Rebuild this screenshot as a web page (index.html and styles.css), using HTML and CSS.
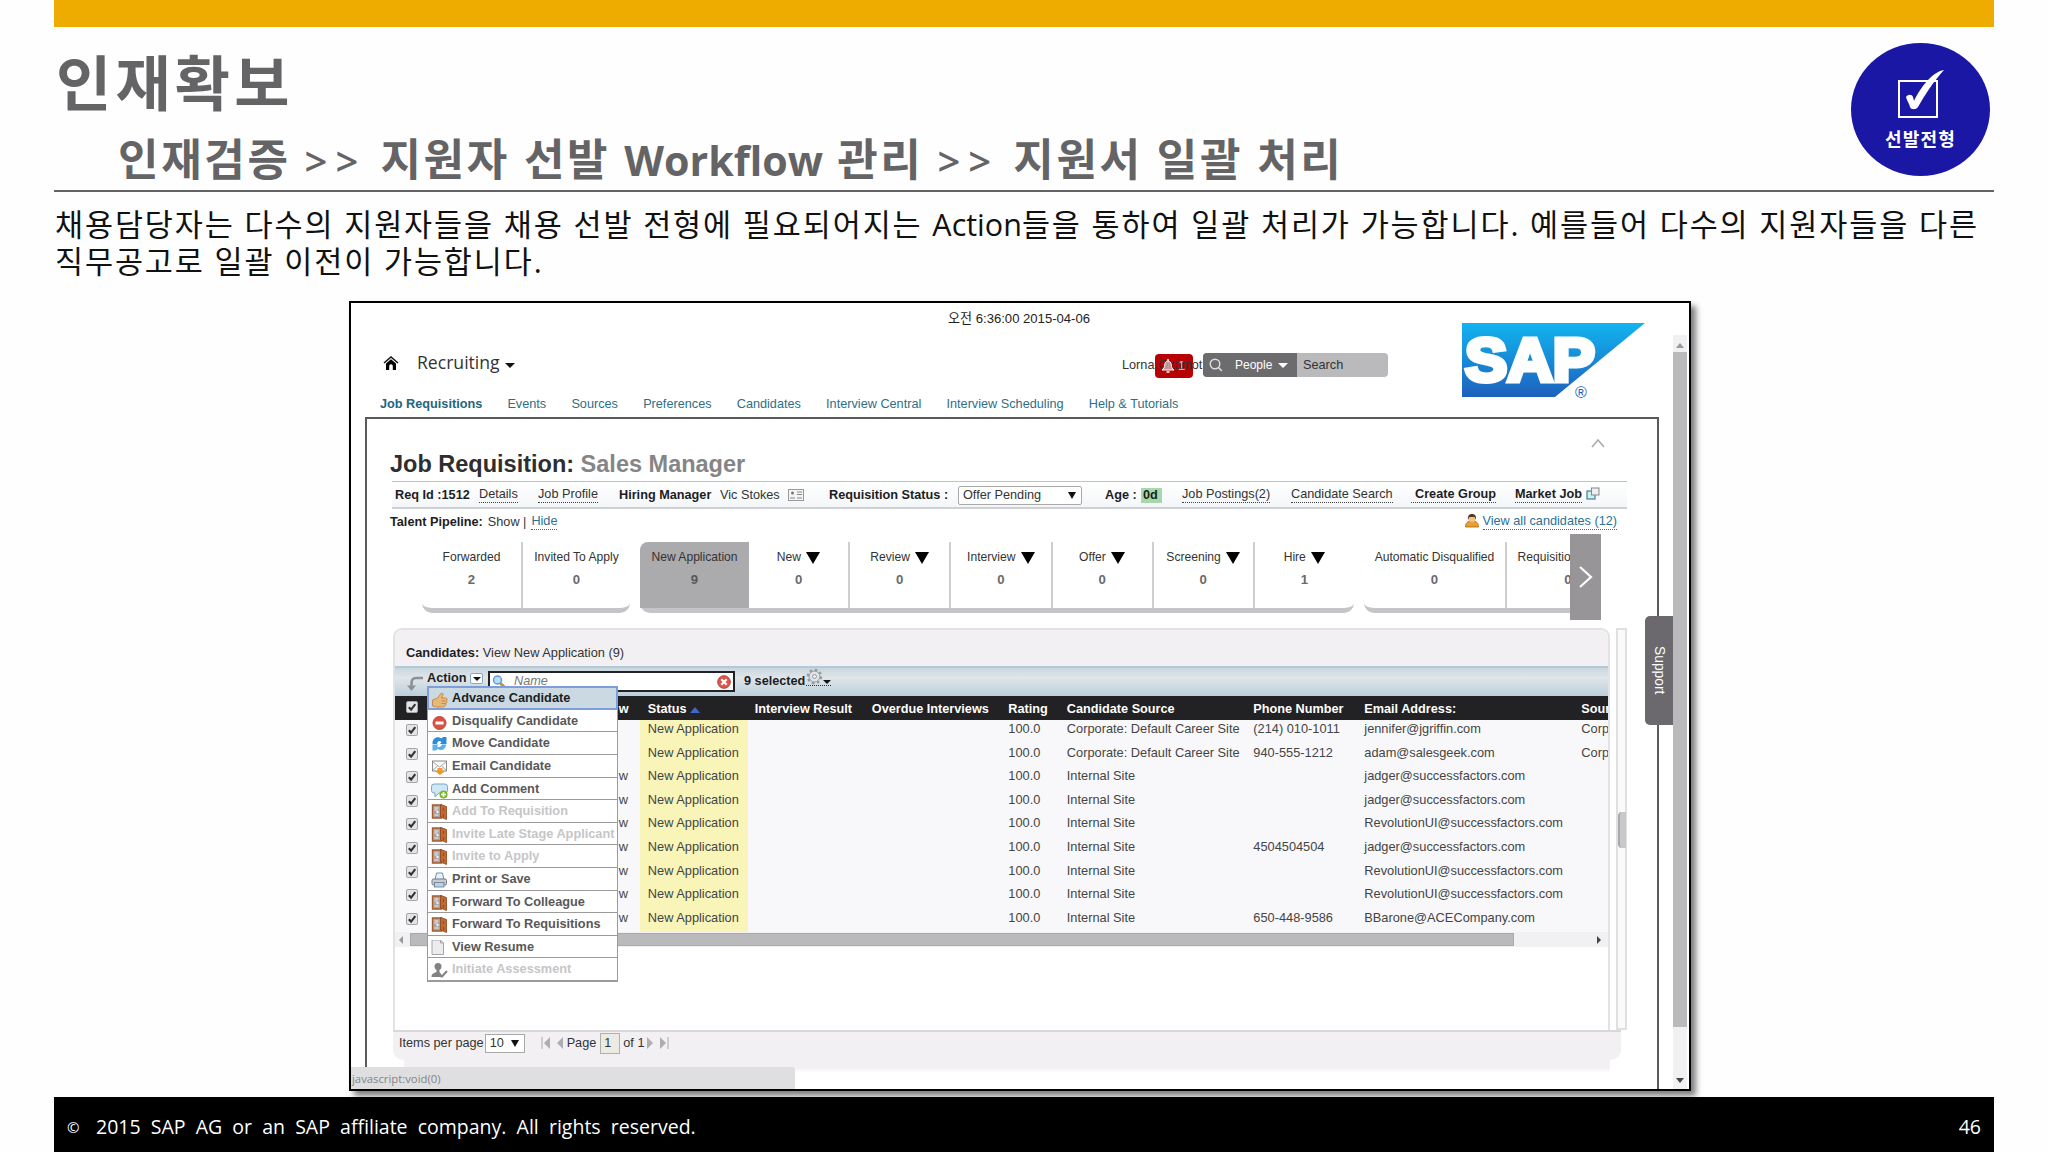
FILE: index.html
```html
<!DOCTYPE html>
<html lang="ko">
<head>
    <meta charset="UTF-8">
    <title>인재확보</title>
    <link rel="stylesheet" href="styles.css">
</head>
<body>
    <!-- shared icons -->
    <svg class="defs" width="0" height="0">
        <linearGradient id="sapBlue" x1="0" y1="0" x2="0" y2="1">
            <stop offset="0" stop-color="#12b4f0"/>
            <stop offset="1" stop-color="#1d61bd"/>
        </linearGradient>
        <symbol id="door" viewBox="0 0 16 16">
            <path d="M1 1h9v13H1z" fill="#a9a4a2" stroke="#a85a2c" stroke-width="1.4"/>
            <path d="M3 4h4M3 6h3M3 11h4" stroke="#eee" stroke-width="1"/>
            <circle cx="6" cy="8" r="1.2" fill="#eee"/>
            <path d="M9 .500l6 2v13L9 13z" fill="#c06a32" stroke="#8e431b" stroke-width=".8"/>
            <path d="M12 4v3M12 10v3" stroke="#9b4d22" stroke-width="1.200"/>
        </symbol>
        <symbol id="check" viewBox="0 0 12 12">
            <rect x=".5" y=".5" width="11" height="11" rx="1.500" fill="#e4e3e5" stroke="#a5a4a6"/>
            <path d="M2.800 6.200l2.300 2.400L9.300 3.200" fill="none" stroke="#333" stroke-width="2.100"/>
        </symbol>
    </svg>

    <div class="slide">
        <div class="top-stripe"></div>

        <header class="slide-head">
            <div class="titles">
                <h1>인재확보</h1>
                <h2>인재검증 <span class="gt">&gt;&gt;</span> 지원자 선발 <span class="latin">Workflow</span> 관리 <span class="gt">&gt;&gt;</span> 지원서 일괄 처리</h2>
            </div>
            <div class="stage-badge">
                <svg width="50" height="52" viewBox="0 0 50 52">
                    <rect x="3" y="13" width="38" height="36" fill="none" stroke="#fff" stroke-width="2"/>
                    <path d="M10 29c2-3 6-3 7 0l1 4C25 19 36 4 48 2 37 14 29 27 22 39c-2 3-7 3-8 0-1-4-3-6-4-10z" fill="#fff"/>
                </svg>
                <span>선발전형</span>
            </div>
        </header>

        <p class="desc">채용담당자는 다수의 지원자들을 채용 선발 전형에 필요되어지는 <span class="latin">Action</span>들을 통하여 일괄 처리가 가능합니다. 예를들어 다수의 지원자들을 다른<br>직무공고로 일괄 이전이 가능합니다.</p>

        <div class="frame">
            <div class="page-area">
                <div class="app-head">
                    <div class="head-left">
                        <div class="stamp">오전 6:36:00 2015-04-06</div>
                        <div class="module-bar">
                            <svg class="home" width="16" height="15" viewBox="0 0 16 15">
                                <path d="M1 7l7-6 7 6" fill="none" stroke="#111" stroke-width="1.500"/>
                                <path d="M3 7.500l5-4.300 5 4.300V14H9.800v-4a1.800 1.800 0 0 0-3.600 0v4H3z" fill="#000"/>
                            </svg>
                            <span class="module">Recruiting</span>
                            <i class="caret"></i>
                            <div class="user">
                                <div class="alert">1</div>
                                <span>Lorna Okamot</span>
                                <svg class="bell" width="12" height="15" viewBox="0 0 12 15">
                                    <path d="M0 12c2-1.500 2.500-3 2.700-5C3 4.500 4 3 6 3s3 1.500 3.300 4c.2 2 .7 3.500 2.700 5z" fill="#fff" fill-opacity=".55" stroke="#fff"/>
                                    <path d="M6 1v2M4.500 14h3" stroke="#fff" stroke-width="1.500"/>
                                </svg>
                            </div>
                            <div class="search">
                                <div class="scope">
                                    <svg width="14" height="14" viewBox="0 0 14 14">
                                        <circle cx="6" cy="6" r="4.800" fill="none" stroke="#ddd" stroke-width="1.400"/>
                                        <path d="M9.300 9.300l3.500 3.700" stroke="#ddd" stroke-width="1.600"/>
                                    </svg>
                                    <span>People</span>
                                    <i class="caret white"></i>
                                </div>
                                <div class="query">Search</div>
                            </div>
                        </div>
                        <nav class="tabs">
                            <b>Job Requisitions</b>
                            <span>Events</span>
                            <span>Sources</span>
                            <span>Preferences</span>
                            <span>Candidates</span>
                            <span>Interview Central</span>
                            <span>Interview Scheduling</span>
                            <span>Help &amp; Tutorials</span>
                        </nav>
                    </div>
                    <svg class="sap" width="184" height="80" viewBox="0 0 184 80">
                        <path d="M0 0h183L93 74H0z" fill="url(#sapBlue)"/>
                        <text class="sap-name" x="3" y="58" textLength="130" lengthAdjust="spacingAndGlyphs">SAP</text>
                        <text class="sap-reg" x="113" y="75">®</text>
                    </svg>
                </div>

                <div class="req-box">
                    <div class="req-title">
                        <h3>Job Requisition: <span>Sales Manager</span></h3>
                        <svg width="14" height="10" viewBox="0 0 14 10"><path d="M1 9l6-7 6 7" fill="none" stroke="#aaa" stroke-width="1.600"/></svg>
                    </div>

                    <div class="req-bar">
                        <b>Req Id :1512</b>
                        <a>Details</a>
                        <a>Job Profile</a>
                        <b>Hiring Manager</b>
                        <span>Vic Stokes</span>
                        <svg width="16" height="13" viewBox="0 0 16 13">
                            <rect x=".5" y=".5" width="15" height="11" fill="#f4f4f4" stroke="#999"/>
                            <circle cx="4.500" cy="4" r="1.500" fill="#777"/>
                            <path d="M2 9h5M9 3h5M9 5.500h5M9 9h5" stroke="#888" stroke-width="1.200"/>
                        </svg>
                        <b>Requisition Status :</b>
                        <div class="status-select">Offer Pending <i class="caret tall"></i></div>
                        <b>Age :</b>
                        <b class="age">0d</b>
                        <a>Job Postings(2)</a>
                        <a>Candidate Search</a>
                        <a class="strong create">Create Group</a>
                        <a class="strong">Market Job</a>
                        <svg class="popout" width="14" height="13" viewBox="0 0 14 13">
                            <rect x="1" y="4" width="8" height="8" fill="#d7edf3" stroke="#3d8199" stroke-width="1.200"/>
                            <rect x="5.500" y="1" width="7.500" height="7" fill="#eee" stroke="#888"/>
                        </svg>
                    </div>

                    <div class="talent">
                        <b>Talent Pipeline:</b>
                        <span>Show |</span>
                        <a>Hide</a>
                        <div class="view-all">
                            <svg width="14" height="14" viewBox="0 0 14 14">
                                <path d="M.500 13c0-4 2-6 6.500-6s6.500 2 6.500 6z" fill="#e8a02c" stroke="#a5681b" stroke-width=".8"/>
                                <circle cx="7" cy="4.800" r="3.400" fill="#f3c08a"/>
                                <path d="M3 6c-.5-4 1-6 4-6s4.500 2 4 6l-1.300-3H4.300z" fill="#5a351d"/>
                            </svg>
                            <a>View all candidates (12)</a>
                        </div>
                    </div>

                    <div class="pipeline">
                        <div class="stages">
                            <div class="group g1">
                                <div class="stage">Forwarded<b>2</b></div>
                                <div class="stage">Invited To Apply<b>0</b></div>
                            </div>
                            <div class="group g2">
                                <div class="stage active">New Application<b>9</b></div>
                                <div class="stage"><span>New <i></i></span><b>0</b></div>
                                <div class="stage"><span>Review <i></i></span><b>0</b></div>
                                <div class="stage"><span>Interview <i></i></span><b>0</b></div>
                                <div class="stage"><span>Offer <i></i></span><b>0</b></div>
                                <div class="stage"><span>Screening <i></i></span><b>0</b></div>
                                <div class="stage"><span>Hire <i></i></span><b>1</b></div>
                            </div>
                            <div class="group g3">
                                <div class="stage">Automatic Disqualified<b>0</b></div>
                                <div class="stage">Requisition Closed<b>0</b></div>
                            </div>
                        </div>
                        <div class="next">
                            <svg width="16" height="22" viewBox="0 0 16 22"><path d="M2 1l11 10L2 21" fill="none" stroke="#fff" stroke-width="2.200"/></svg>
                        </div>
                    </div>

                    <div class="list-row">
                        <div class="panel">
                            <div class="panel-title"><b>Candidates:</b> View New Application (9)</div>
                            <div class="toolbar">
                                <svg class="back" width="17" height="16" viewBox="0 0 17 16">
                                    <path d="M16 2H9C6 2 4.500 4 4.500 7v4" fill="none" stroke="#8b9196" stroke-width="2.600"/>
                                    <path d="M0 9.500h9L4.500 15z" fill="#8b9196"/>
                                </svg>
                                <a class="action">Action <i class="drop"><i class="caret"></i></i></a>
                                <div class="name-box">
                                    <svg width="15" height="14" viewBox="0 0 15 14">
                                        <path d="M8 8l5.500 5" stroke="#d08a35" stroke-width="3"/>
                                        <circle cx="5.500" cy="5" r="4" fill="#b9dcf7" stroke="#5d9bdc" stroke-width="1.500"/>
                                    </svg>
                                    <em>Name</em>
                                    <svg width="14" height="14" viewBox="0 0 14 14">
                                        <circle cx="7" cy="7" r="6.300" fill="#d9574c" stroke="#b8443a"/>
                                        <path d="M4.300 4.300l5.400 5.400M9.700 4.300L4.300 9.700" stroke="#fff" stroke-width="2.200"/>
                                    </svg>
                                </div>
                                <b class="selected">9 selected</b>
                                <div class="gear">
                                    <svg width="17" height="17" viewBox="0 0 17 17">
                                        <circle cx="8.500" cy="8.500" r="6.700" fill="none" stroke="#999" stroke-width="2.200" stroke-dasharray="2.700 2.560"/>
                                        <circle cx="8.500" cy="8.500" r="5.400" fill="#dfe5e8" stroke="#999"/>
                                        <circle cx="8.500" cy="8.500" r="2" fill="#eef2f4" stroke="#999"/>
                                    </svg>
                                    <i class="caret small"></i>
                                </div>
                            </div>

                            <div class="grid-row grid-head">
                                <svg width="12" height="12"><use href="#check"/></svg><span>w</span><span>Status <i class="sort"></i></span><span>Interview Result</span><span>Overdue Interviews</span><span>Rating</span><span>Candidate Source</span><span>Phone Number</span><span>Email Address:</span><span>Sour</span>
                            </div>
                            <div class="grid-body">
                                <div class="grid-row"><svg width="12" height="12"><use href="#check"/></svg><span></span><span class="st">New Application</span><span></span><span></span><span>100.0</span><span>Corporate: Default Career Site</span><span>(214) 010-1011</span><span>jennifer@jgriffin.com</span><span>Corp</span></div>
                                <div class="grid-row"><svg width="12" height="12"><use href="#check"/></svg><span></span><span class="st">New Application</span><span></span><span></span><span>100.0</span><span>Corporate: Default Career Site</span><span>940-555-1212</span><span>adam@salesgeek.com</span><span>Corp</span></div>
                                <div class="grid-row"><svg width="12" height="12"><use href="#check"/></svg><span>w</span><span class="st">New Application</span><span></span><span></span><span>100.0</span><span>Internal Site</span><span></span><span>jadger@successfactors.com</span><span></span></div>
                                <div class="grid-row"><svg width="12" height="12"><use href="#check"/></svg><span>w</span><span class="st">New Application</span><span></span><span></span><span>100.0</span><span>Internal Site</span><span></span><span>jadger@successfactors.com</span><span></span></div>
                                <div class="grid-row"><svg width="12" height="12"><use href="#check"/></svg><span>w</span><span class="st">New Application</span><span></span><span></span><span>100.0</span><span>Internal Site</span><span></span><span>RevolutionUI@successfactors.com</span><span></span></div>
                                <div class="grid-row"><svg width="12" height="12"><use href="#check"/></svg><span>w</span><span class="st">New Application</span><span></span><span></span><span>100.0</span><span>Internal Site</span><span>4504504504</span><span>jadger@successfactors.com</span><span></span></div>
                                <div class="grid-row"><svg width="12" height="12"><use href="#check"/></svg><span>w</span><span class="st">New Application</span><span></span><span></span><span>100.0</span><span>Internal Site</span><span></span><span>RevolutionUI@successfactors.com</span><span></span></div>
                                <div class="grid-row"><svg width="12" height="12"><use href="#check"/></svg><span>w</span><span class="st">New Application</span><span></span><span></span><span>100.0</span><span>Internal Site</span><span></span><span>RevolutionUI@successfactors.com</span><span></span></div>
                                <div class="grid-row"><svg width="12" height="12"><use href="#check"/></svg><span>w</span><span class="st">New Application</span><span></span><span></span><span>100.0</span><span>Internal Site</span><span>650-448-9586</span><span>BBarone@ACECompany.com</span><span></span></div>
                            </div>
                            <div class="hscroll"><i class="left"></i><div class="thumb"></div><i class="right"></i></div>

                            <ul class="menu">
                                <li class="hot">
                                    <svg width="16" height="16" viewBox="0 0 16 16"><path d="M1 8l5-2 4-5c2 0 2 2 0 5h4c2 0 2 2 1 3 1 1 0 2-.500 2.500 0 1.500-.500 2-1 2-.500 1.500-1.500 1.500-2.500 1.500H5L1 14z" fill="#e9b777" stroke="#bd7f3c" stroke-width=".8"/><path d="M10 9h4M10 11.500h4" stroke="#bd7f3c" stroke-width=".8"/></svg>
                                    Advance Candidate</li>
                                <li>
                                    <svg width="16" height="16" viewBox="0 0 16 16"><circle cx="8" cy="9" r="6.500" fill="#dc4f43" stroke="#b84b40"/><rect x="4" y="7.500" width="8" height="3" fill="#fff"/></svg>
                                    Disqualify Candidate</li>
                                <li>
                                    <svg width="16" height="16" viewBox="0 0 16 16"><path d="M1 7c0-5 5-7.500 9-4.500L11.500 1H15v7H8.500L10 6C8 4 6 5 5.500 8H1z" fill="#2e8bd8"/><path d="M14.500 8.500c0 5-5 7-8.500 4.500L4.500 14.500H1V8.500h6L5.500 10.500c2.500 1.500 4 0 5-2z" fill="#5bb0ee"/></svg>
                                    Move Candidate</li>
                                <li>
                                    <svg width="16" height="16" viewBox="0 0 16 16"><rect x="1" y="2" width="14" height="10" fill="#f7f7f7" stroke="#8a8a8a"/><path d="M1.500 11L6 7M14.500 11L10 7M1.500 3L8 8l6.500-5" fill="none" stroke="#aaa"/><path d="M6 9h5v3h3l-5.500 4L3 12h3z" fill="#f09a2e"/></svg>
                                    Email Candidate</li>
                                <li>
                                    <svg width="17" height="17" viewBox="0 0 17 17"><path d="M3 2h11q2.500 0 2.500 2.500v4Q16.500 11 14 11H8l-4 4v-4H3Q.500 11 .500 8.500v-4Q.500 2 3 2z" fill="#cfe6f5" stroke="#7ba6c2"/><circle cx="12.500" cy="12.500" r="4" fill="#76b82a"/><path d="M12.500 10v5M10 12.500h5" stroke="#fff" stroke-width="1.600"/></svg>
                                    Add Comment</li>
                                <li class="off"><svg width="16" height="16"><use href="#door"/></svg>Add To Requisition</li>
                                <li class="off"><svg width="16" height="16"><use href="#door"/></svg>Invite Late Stage Applicant</li>
                                <li class="off"><svg width="16" height="16"><use href="#door"/></svg>Invite to Apply</li>
                                <li>
                                    <svg width="17" height="16" viewBox="0 0 17 16"><path d="M4 8L5.500 1h6L13 8z" fill="#e6f1fb" stroke="#7090b0"/><rect x="1" y="7" width="14.500" height="6" rx="1.500" fill="#c9ccd3" stroke="#6e7683"/><rect x="3.500" y="10.500" width="9.500" height="4.500" fill="#b3d5f2" stroke="#6e7683" stroke-width=".8"/></svg>
                                    Print or Save</li>
                                <li><svg width="16" height="16"><use href="#door"/></svg>Forward To Colleague</li>
                                <li><svg width="16" height="16"><use href="#door"/></svg>Forward To Requisitions</li>
                                <li>
                                    <svg width="16" height="16" viewBox="0 0 16 16"><path d="M.500 0H9l3 3v11.500H.500z" fill="#ececee" stroke="#a5a5a8"/><path d="M9 0v3h3" fill="none" stroke="#a5a5a8"/></svg>
                                    View Resume</li>
                                <li class="off">
                                    <svg width="16" height="16" viewBox="0 0 16 16"><circle cx="6.500" cy="4.500" r="3.500" fill="#828284"/><path d="M0 15c0-4 3-4 5-5V7h3v3l3 5z" fill="#828284"/><path d="M7.500 11.500l3 3L15.500 9" fill="none" stroke="#828284" stroke-width="2"/></svg>
                                    Initiate Assessment</li>
                            </ul>
                        </div>
                        <div class="rail"><div class="grip"></div></div>
                    </div>

                    <div class="pager">
                        <span>Items per page</span>
                        <div class="page-size">10 <i class="caret tall"></i></div>
                        <svg width="23" height="12" viewBox="0 0 23 12"><path d="M1 0v12" stroke="#aaa"/><path d="M9 0v12L3 6zM22 0v12l-6-6z" fill="#aeadb0"/></svg>
                        <span>Page</span>
                        <div class="page-no">1</div>
                        <span>of 1</span>
                        <svg width="23" height="12" viewBox="0 0 23 12"><path d="M22 0v12" stroke="#aaa"/><path d="M1 0v12l6-6zM14 0v12l6-6z" fill="#aeadb0"/></svg>
                    </div>
                    <div class="pager-foot"></div>
                </div>
            </div>
            <div class="vscroll"><i class="up"></i><div class="thumb"></div><i class="down"></i></div>

            <div class="support">Support</div>
            <div class="link-hint">javascript:void(0)</div>
        </div>

        <footer class="slide-foot">
            <span class="copy">©</span>
            <span>2015 SAP AG or an SAP affiliate company. All rights reserved.</span>
            <span class="num">46</span>
        </footer>
    </div>
</body>
</html>
```

FILE: styles.css
```css
* {
    box-sizing: border-box;
}
body {
    margin: 0;
    width: 2048px;
    height: 1152px;
    overflow: hidden;
    background: #fefefe;
    font-family: "Liberation Sans", "Noto Sans CJK KR", sans-serif;
    font-size: 12.7px;
    color: #333;
}
h1, h2, h3, p, ul {
    margin: 0;
    padding: 0;
}
i {
    font-style: normal;
}
svg {
    display: block;
    flex: none;
}
.defs {
    position: absolute;
}
.slide {
    width: 1940px;
    height: 1152px;
    margin-left: 54px;
    display: flex;
    flex-direction: column;
}
.top-stripe {
    height: 27px;
    background: #eeab00;
}

/* slide title */
.slide-head {
    height: 165px;
    display: flex;
    justify-content: space-between;
    border-bottom: 2px solid #636365;
    font-family: "Open Sans", "Noto Sans CJK KR", sans-serif;
    white-space: nowrap;
}
h1 {
    height: 106px;
    padding: 14px 0 0 2px;
    font-size: 60px;
    line-height: 84px;
    letter-spacing: 4.2px;
    color: #646466;
}
h2 {
    margin-top: -11px;
    padding-left: 64px;
    font-size: 44px;
    line-height: 74px;
    letter-spacing: 2.65px;
    color: #646466;
}
h2 .gt {
    font-weight: 600;
    font-size: 40px;
    letter-spacing: 8px;
}
h2 .latin {
    font-size: 41.2px;
    letter-spacing: 0;
}
.stage-badge {
    width: 139px;
    height: 133px;
    margin: 16px 4px 0 0;
    padding-top: 24px;
    border-radius: 50%;
    background: #1b17a5;
    color: #fff;
    display: flex;
    flex-direction: column;
    align-items: center;
    font-size: 18px;
    font-weight: 700;
    line-height: 26px;
    letter-spacing: 1.2px;
}
.stage-badge svg {
    margin: 1px 0 6px;
}
.desc {
    height: 109px;
    padding: 14px 0 0 1px;
    font-family: "Open Sans", "Noto Sans CJK KR", sans-serif;
    font-size: 30.5px;
    line-height: 36.5px;
    letter-spacing: 1.89px;
    color: #111;
    white-space: nowrap;
}
.desc .latin {
    letter-spacing: 0;
}

/* application window */
.frame {
    position: relative;
    width: 1342px;
    height: 790px;
    margin-left: 295px;
    border: 2px solid #000;
    box-shadow: 5px 5px 6px rgba(0, 0, 0, .5);
    background: #fff;
    display: flex;
    flex: none;
}
.page-area {
    width: 1322px;
    display: flex;
    flex-direction: column;
}
.app-head {
    height: 114px;
    display: flex;
    flex: none;
}
.head-left {
    width: 1111px;
}
.sap {
    margin-top: 20px;
}
.sap-name {
    font: bold 62px "Liberation Sans", sans-serif;
    fill: #fff;
    stroke: #fff;
    stroke-width: 5px;
}
.sap-reg {
    font: 16px "Liberation Sans", sans-serif;
    fill: #1d61bd;
}
.stamp {
    height: 32px;
    line-height: 32px;
    padding-left: 597px;
    font-size: 13.1px;
    color: #222;
}
.module-bar {
    height: 60px;
    padding-left: 32px;
    display: flex;
    align-items: center;
}
.home {
    margin: -3px 18px 0 0;
}
.module {
    width: 88px;
    font-family: "Open Sans", sans-serif;
    font-size: 17.6px;
    line-height: 28px;
    margin-top: -7px;
}
.caret {
    display: inline-block;
    border: 5px solid transparent;
    border-top-color: #111;
    border-bottom: 0;
}
.caret.white {
    border-top-color: #fff;
}
.caret.tall {
    border-width: 7px 4px 0;
}
.caret.small {
    border-width: 4px 4px 0;
}
.user {
    position: relative;
    width: 81px;
    height: 24px;
    line-height: 24px;
    margin-left: 607px;
    white-space: nowrap;
}
.user span {
    position: relative;
}
.alert {
    position: absolute;
    left: 33px;
    top: 1px;
    width: 38px;
    height: 24px;
    padding-left: 23px;
    border-radius: 4px;
    background: #b90005;
    color: #f0a0a0;
    font-weight: 700;
}
.bell {
    position: absolute;
    left: 40px;
    top: 5px;
}
.search {
    display: flex;
    width: 185px;
    height: 24px;
    line-height: 24px;
    border-radius: 4px;
    overflow: hidden;
    background: #bab9bb;
}
.scope {
    width: 94px;
    padding-left: 6px;
    background: #6c6b6e;
    color: #fff;
    display: flex;
    align-items: center;
}
.scope span {
    width: 43px;
    margin-left: 12px;
    font-size: 12px;
}
.query {
    padding-left: 6px;
}
.tabs {
    display: flex;
    gap: 25.2px;
    padding-left: 29px;
    line-height: 18px;
    font-size: 12.7px;
    color: #2d6f86;
    white-space: nowrap;
}
.tabs b {
    color: #1f6680;
}

/* job requisition */
.req-box {
    width: 1294px;
    margin-left: 14px;
    flex: 1;
    border: 2px solid #5a5a5c;
    border-bottom: 0;
    padding-left: 25px;
}
.req-title {
    height: 62px;
    display: flex;
    justify-content: space-between;
    padding-right: 52px;
    margin-left: -2px;
}
.req-title h3 {
    padding-top: 31px;
    font-size: 23.5px;
    line-height: 28px;
    color: #2e2e30;
}
.req-title h3 span {
    color: #858587;
}
.req-title svg {
    margin-top: 19px;
}
.req-bar {
    width: 1235px;
    height: 28px;
    border-top: 1px solid #c2c2c4;
    border-bottom: 2px solid #cfd0d3;
    background: linear-gradient(#fff, #f3f6f8);
    padding-left: 3px;
    padding-top: 1px;
    display: grid;
    grid-template-columns: 84px 59px 81px 101px 68px 41px 129px 147px 36px 41px 109px 120px 104px 71px 20px;
    align-items: center;
    justify-items: start;
    white-space: nowrap;
}
b {
    color: #1d1d1f;
}
a {
    line-height: 15px;
    border-bottom: 1px dotted #444;
}
a.strong {
    font-weight: 700;
    color: #1d1d1f;
}
a.create {
    padding-left: 4px;
}
.popout {
    margin-top: -3px;
}
.status-select {
    width: 124px;
    height: 19px;
    border: 1px solid #a9a9a9;
    border-radius: 2px;
    background: #fff;
    padding: 0 5px 0 4px;
    display: flex;
    align-items: center;
    justify-content: space-between;
}
.age {
    padding: 0 4px 0 2px;
    line-height: 15px;
    background: #a8d8a9;
}
.talent {
    height: 25px;
    display: flex;
    align-items: center;
    gap: 5px;
    padding-right: 40px;
    margin-left: -2px;
}
.talent a {
    color: #2d6f96;
    border-color: #2d6f96;
}
.view-all {
    margin-left: auto;
    display: flex;
    gap: 4px;
}

/* talent pipeline */
.pipeline {
    height: 86px;
    margin-left: 30px;
    display: flex;
    font-size: 12.1px;
}
.stages {
    width: 1148px;
    padding-top: 8px;
    overflow: hidden;
    display: flex;
    gap: 10px;
}
.group {
    height: 71px;
    display: flex;
    flex: none;
    border-bottom: 5px solid #c6c4c8;
    border-radius: 0 0 10px 10px;
}
.g1 {
    width: 208px;
}
.g2 {
    width: 714px;
}
.g3 {
    width: 265px;
}
.stage {
    flex: 1 0 0;
    text-align: center;
    padding-top: 6px;
    line-height: 18px;
    white-space: nowrap;
    border-left: 2px solid #cfcdd1;
}
.stage:first-child, .stage.active + .stage {
    border-left: 0;
}
.stage b {
    display: block;
    margin-top: 5px;
    font-size: 13.2px;
    color: #6a696c;
}
.stage i {
    display: inline-block;
    margin-left: 2px;
    border: 7px solid transparent;
    border-width: 12px 7px 0;
    border-top-color: #000;
    vertical-align: -3px;
}
.g1 .stage:first-child {
    flex: 0 0 99px;
}
.stage.active {
    flex: 0 0 109px;
    background: #abaaad;
    border-radius: 8px 0 0 0;
}
.stage.active b {
    color: #58575a;
}
.g3 .stage:first-child {
    flex: 0 0 141px;
}
.next {
    width: 31px;
    background: #979598;
    display: flex;
    align-items: center;
    justify-content: center;
}

/* candidate list */
.list-row {
    display: flex;
    height: 402px;
    margin: 8px 0 0 1px;
}
.panel {
    position: relative;
    width: 1217px;
    border: 2px solid #e2e1e4;
    border-bottom: 0;
    border-radius: 9px 9px 0 0;
    margin-right: 6px;
}
.panel-title {
    height: 36px;
    padding: 10px 0 0 11px;
    line-height: 26px;
    background: #f2f0f3;
    border-radius: 8px 8px 0 0;
    font-size: 12.8px;
}
.toolbar {
    height: 30px;
    border-top: 2px solid #b3c9d5;
    background: linear-gradient(#c9d6de, #e0e6ea 35%, #bbcfda);
    display: flex;
}
.back {
    margin: 8px 4px 0 12px;
}
.action {
    height: 19px;
    width: 59px;
    margin-left: -1px;
    line-height: 20px;
    font-weight: 700;
    color: #1d1d1f;
    display: flex;
    justify-content: space-between;
}
.drop {
    width: 13px;
    height: 11px;
    margin: 5px 3px 0 0;
    border: 1px solid #8aa8c4;
    border-radius: 2px;
    background: #fff;
    display: flex;
    align-items: center;
    justify-content: center;
}
.drop .caret {
    border-width: 4px 4px 0;
}
.name-box {
    width: 247px;
    height: 21px;
    margin: 3px 0 0 2px;
    border: 2px solid #222;
    background: #fff;
    padding: 0 2px;
    display: flex;
    align-items: center;
    gap: 7px;
}
.name-box em {
    flex: 1;
    margin-top: -2px;
    color: #777;
}
.selected {
    margin-left: 9px;
    line-height: 27px;
}
.gear {
    width: 25px;
    height: 18px;
    margin-left: 1px;
    border-bottom: 1px dotted #333;
    display: flex;
    align-items: flex-end;
}
.gear .caret {
    margin-bottom: 1px;
}
.grid-row {
    height: 23.6px;
    display: grid;
    grid-template-columns: 25px 209px 108px 124px 136.5px 58.5px 186.5px 111px 217px 30px;
    padding-left: 10.8px;
    line-height: 18px;
    overflow: hidden;
    white-space: nowrap;
}
.grid-row > svg {
    margin-top: 4px;
}
.grid-row > :nth-child(2) {
    padding-left: 188px;
}
.grid-row > :nth-child(3) {
    padding-left: 8px;
}
.grid-row > :nth-child(4) {
    padding-left: 7px;
}
.grid-head {
    height: 24px;
    background: #222123;
    color: #fff;
    font-weight: 700;
    line-height: 27px;
}
.grid-head > svg {
    margin-top: 5px;
}
.sort {
    display: inline-block;
    border: 5px solid transparent;
    border-width: 0 5px 6px;
    border-bottom-color: #3f68c8;
}
.grid-body {
    height: 212px;
    background: #f8f8fa;
    font-size: 12.8px;
    color: #444;
}
.st {
    background: #f9f5b8;
}
.hscroll {
    position: relative;
    height: 15px;
    background: #f1f0f3;
    display: flex;
    align-items: center;
}
.hscroll .thumb {
    width: 1104px;
    height: 13px;
    margin: 0 83px 0 7px;
    background: #bab9bb;
    border: 1px solid #aaa9ab;
}
.left, .right, .up, .down {
    border: 4px solid transparent;
}
.left {
    border-right-color: #999;
}
.right {
    border-left-color: #444;
}
.menu {
    position: absolute;
    left: 32px;
    top: 56px;
    width: 191px;
    border: 1px solid #9b9b9e;
    border-top: 0;
    background: #fff;
    list-style: none;
    font-weight: 700;
    font-size: 12.75px;
    color: #58585a;
    white-space: nowrap;
}
.menu li {
    height: 22.6px;
    padding-left: 3px;
    border-bottom: 1px solid #9b9b9e;
    line-height: 21px;
    display: flex;
    gap: 4px;
}
.menu svg {
    width: 17px;
    margin-top: 4px;
}
.menu .hot {
    height: 23.8px;
    margin: 0 -1px;
    padding-left: 2px;
    border: 2px solid #7d9edb;
    background: #cbdae2;
    color: #1d1d1f;
    line-height: 19px;
}
.menu .off {
    color: #c6c5c8;
}
.rail {
    width: 11px;
    border: 2px solid #e0dfe2;
    background: #fafafb;
    padding-top: 182px;
}
.grip {
    width: 8px;
    height: 36px;
    border-radius: 4px 0 0 4px;
    background: #c9c8cb;
    border-left: 2px solid #a9a8ab;
}
.pager {
    width: 1228px;
    height: 30px;
    margin-left: 1px;
    border-top: 2px solid #d8d7da;
    border-radius: 0 0 10px 10px;
    background: #f2f0f3;
    padding: 0 0 6px 6px;
    display: flex;
    align-items: center;
}
.page-size {
    width: 40px;
    height: 19px;
    margin: 0 14px 0 1px;
    border: 1px solid #a9a9a9;
    background: #fff;
    padding: 0 5px 0 4px;
    display: flex;
    align-items: center;
    justify-content: space-between;
}
.pager svg {
    margin: 0 3px 0 2px;
}
.page-no {
    width: 20px;
    height: 21px;
    margin: 0 3px 0 4px;
    padding-left: 3px;
    border: 1px solid #b2b1a8;
    background: #ebebe4;
    line-height: 19px;
}
.pager-foot {
    width: 1206px;
    height: 13px;
    margin-left: 12px;
    background: linear-gradient(#f2f0f3, #f2f0f3 60%, #fff);
}

/* window overlays */
.vscroll {
    width: 14px;
    height: 754px;
    margin-top: 32px;
    background: #f1f0f3;
    display: flex;
    flex-direction: column;
    align-items: center;
}
.vscroll .thumb {
    width: 14px;
    height: 675px;
    margin: 4px 0 51px;
    background: #bab9bb;
}
.up {
    margin-top: 5px;
    border-top-width: 0;
    border-bottom: 5px solid #999;
}
.vscroll .up {
    height: 8px;
}
.down {
    border-top: 5px solid #444;
}
.support {
    position: absolute;
    left: 1294px;
    top: 313px;
    width: 28px;
    height: 109px;
    border-radius: 5px 0 0 5px;
    background: #6b696d;
    color: #fff;
    font-size: 13.8px;
    line-height: 28px;
    text-align: center;
    writing-mode: vertical-rl;
}
.link-hint {
    position: absolute;
    left: 0;
    bottom: 0;
    width: 444px;
    height: 22px;
    padding-left: 1px;
    border-radius: 0 3px 0 0;
    background: #dfdee0;
    color: #858587;
    font-family: "Open Sans", sans-serif;
    font-size: 11.3px;
    line-height: 24px;
}

.slide-foot {
    height: 55px;
    margin-top: 6px;
    padding: 4px 13px 0 13px;
    background: #000;
    color: #fff;
    display: flex;
    align-items: center;
    font-family: "Open Sans", sans-serif;
    font-size: 19.5px;
    word-spacing: 5.1px;
}
.copy {
    width: 29px;
    font-size: 15px;
}
.num {
    margin-left: auto;
}
```
